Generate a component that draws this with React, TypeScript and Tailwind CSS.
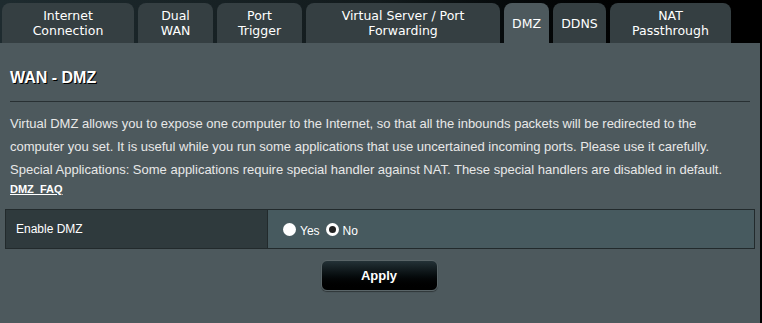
import { useState } from "react";

const tabs = [
  { label: ["Internet", "Connection"], w: "w-[132px]" },
  { label: ["Dual", "WAN"], w: "w-[75px]" },
  { label: ["Port", "Trigger"], w: "w-[85px]" },
  { label: ["Virtual Server / Port", "Forwarding"], w: "w-[194px]" },
  { label: ["DMZ"], w: "w-[45px]", active: true },
  { label: ["DDNS"], w: "w-[53px]" },
  { label: ["NAT", "Passthrough"], w: "w-[121px]" },
];

export default function App() {
  const [dmz, setDmz] = useState("no");

  return (
    <div className="w-[762px] h-[323px] bg-black overflow-hidden font-['Liberation_Sans',Arial,sans-serif]">
      <div className="flex items-end gap-[4px] h-[43px] pl-[2px] bg-gradient-to-r from-[#1e2b2f] via-[#121a1c] to-[#000000]">
        {tabs.map((t) => (
          <div
            key={t.label.join(" ")}
            className={`${t.w} h-[40px] rounded-t-[8px] flex flex-col items-center justify-center text-white text-[12.5px] leading-[15px] font-['DejaVu_Sans',Verdana,sans-serif] ${
              t.active ? "bg-[#4d595d]" : "bg-[#353f42]"
            }`}
          >
            {t.label.map((l) => (
              <span key={l}>{l}</span>
            ))}
          </div>
        ))}
      </div>

      <div className="w-[760px] h-[280px] bg-[#4d595d] px-[5px] pt-[25px]">
        <div className="px-[5px]">
          <h1 className="text-white font-bold text-[16px] leading-[20px] [text-shadow:1px_1px_0_#000]">
            WAN - DMZ
          </h1>
          <div className="mt-[13px] h-[2px] w-[740px] border-t border-[#283033] border-b-[#5e6a6e]" />
          <p className="mt-[9px] text-[13px] leading-[23px] text-[#e8e8e8]">
            Virtual DMZ allows you to expose one computer to the Internet, so that all the inbounds packets will be redirected to the
            computer you set. It is useful while you run some applications that use uncertained incoming ports. Please use it carefully.
            <br />
            Special Applications: Some applications require special handler against NAT. These special handlers are disabled in default.
          </p>
          <a className="block text-[11px] leading-[16px] font-bold underline text-white" href="#">
            DMZ_FAQ
          </a>
        </div>

        <div className="mt-[12px] flex h-[40px] w-[750px] border border-[#222a2c]">
          <div className="w-[262px] bg-[#2f3a3d] border-r border-[#222a2c] flex items-center pl-[10px] text-[12px] text-white">
            Enable DMZ
          </div>
          <div className="flex-1 bg-[#475a5f] flex items-center pl-[15px] text-[12px] text-white">
            <label className="flex items-center cursor-pointer" onClick={() => setDmz("yes")}>
              <span className="w-[13px] h-[13px] rounded-full bg-white flex items-center justify-center">
                {dmz === "yes" && <span className="w-[6px] h-[6px] rounded-full bg-[#222]" />}
              </span>
              <span className="ml-[4px] mt-[3px]">Yes</span>
            </label>
            <label className="flex items-center cursor-pointer ml-[6px]" onClick={() => setDmz("no")}>
              <span className="w-[13px] h-[13px] rounded-full bg-white flex items-center justify-center">
                {dmz === "no" && <span className="w-[7px] h-[7px] rounded-full bg-[#222]" />}
              </span>
              <span className="ml-[4px] mt-[3px]">No</span>
            </label>
          </div>
        </div>

        <div className="flex justify-center mt-[11px] pr-[2px]">
          <button className="w-[117px] h-[31px] rounded-[6px] border border-[#5a6568] bg-gradient-to-b from-[#243237] to-[#000000] text-white font-bold text-[13px] shadow-[0_1px_1px_rgba(0,0,0,0.4)]">
            Apply
          </button>
        </div>
      </div>
    </div>
  );
}
